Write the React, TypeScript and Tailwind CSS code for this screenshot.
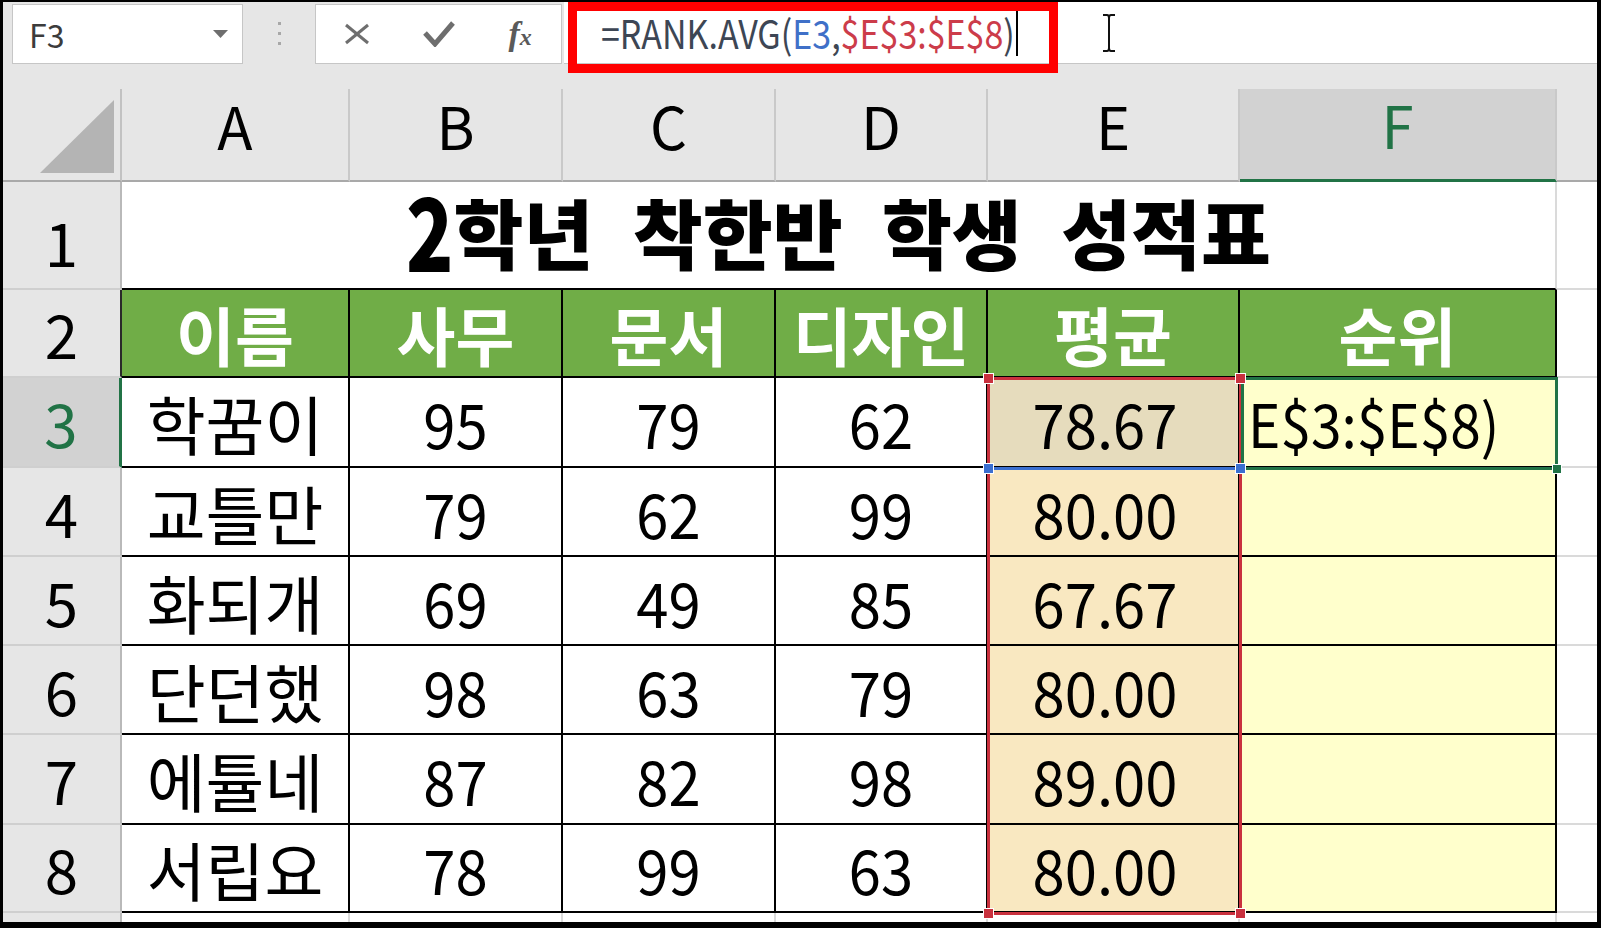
import React from "react";

const names = ["학꿈이", "교틀만", "화되개", "단던했", "에튤네", "서립요"];
const scores = [
  ["95", "79", "62", "78.67"],
  ["79", "62", "99", "80.00"],
  ["69", "49", "85", "67.67"],
  ["98", "63", "79", "80.00"],
  ["87", "82", "98", "89.00"],
  ["78", "99", "63", "80.00"],
];
const heads = ["이름", "사무", "문서", "디자인", "평균", "순위"];

const colHdr =
  "bg-[#e6e6e6] border-r-2 border-b-2 border-r-[#c9c9c9] border-b-[#a9a9a9] flex items-center justify-center pb-[20px] text-[58px] leading-none text-black";
const rowHdr =
  "bg-[#e6e6e6] border-r-2 border-b-2 border-r-[#b9b9b9] border-b-[#cfcfcf] flex items-center justify-center text-[60px] leading-none text-black";
const gridCell = "bg-white border-b-2 border-b-[#dadada]";
const dataCell = "border-r-2 border-b-2 border-black flex items-center justify-center leading-none text-black";
const num = "inline-block text-[58px] scale-y-[1.07]";

function FormulaBar() {
  return (
    <div className="relative h-[63px] flex items-start shrink-0">
      <div className="ml-[9px] mt-[2px] w-[231px] h-[60px] bg-white border border-[#c6c6c6] flex items-center justify-between pl-[16px] pr-[14px]">
        <span className="text-[32px] leading-none text-[#3c3c3c]">F3</span>
        <svg width="15" height="8" viewBox="0 0 15 8">
          <polygon points="0,0 15,0 7.5,8" fill="#6e6e6e" />
        </svg>
      </div>
      <div className="w-[72px] h-[62px] flex flex-col items-center justify-center gap-[7px]">
        <span className="block w-[3px] h-[3px] bg-[#a8a8a8]" />
        <span className="block w-[3px] h-[3px] bg-[#a8a8a8]" />
        <span className="block w-[3px] h-[3px] bg-[#a8a8a8]" />
      </div>
      <div className="mt-[2px] w-[247px] h-[60px] bg-white border border-[#c6c6c6] flex items-center">
        <div className="w-[82px] flex justify-center">
          <svg width="26" height="22" viewBox="0 0 26 22">
            <line x1="2" y1="2" x2="24" y2="20" stroke="#6e6e6e" strokeWidth="3" />
            <line x1="24" y1="2" x2="2" y2="20" stroke="#6e6e6e" strokeWidth="3" />
          </svg>
        </div>
        <div className="w-[82px] flex justify-center">
          <svg width="32" height="26" viewBox="0 0 32 26">
            <polyline points="2,12 12,23 30,2" fill="none" stroke="#6e6e6e" strokeWidth="5" />
          </svg>
        </div>
        <div className="w-[82px] flex justify-center">
          <span className="font-['Liberation_Serif',serif] italic font-bold text-[34px] leading-none text-[#5a5a5a]">
            f<span className="text-[24px]">x</span>
          </span>
        </div>
      </div>
      <div className="ml-[2px] flex-1 h-[62px] bg-white border-b border-[#c6c6c6] flex items-center pl-[37px]">
        <span className="inline-block scale-y-[1.15] text-[34px] leading-none whitespace-pre">
          <span className="text-[#3d4654]">=RANK.AVG(</span>
          <span className="text-[#3f70c8]">E3</span>
          <span className="text-[#3d4654]">,</span>
          <span className="text-[#cc3c4a]">$E$3:$E$8</span>
          <span className="text-[#3d4654]">)</span>
        </span>
        <span className="ml-[1px] w-[2px] h-[47px] bg-black" />
        <svg className="ml-[84px]" width="14" height="38" viewBox="0 0 14 38">
          <path d="M1 1 H5 Q7 1 7 4 V34 Q7 37 5 37 H1 M13 1 H9 Q7 1 7 4 M7 34 Q7 37 9 37 H13" fill="none" stroke="#111" strokeWidth="2" />
        </svg>
      </div>
      <div className="absolute left-[565px] top-0 w-[490px] h-[71px] border-[9px] border-[#ff0000]" />
    </div>
  );
}

function Sheet() {
  return (
    <div className="relative grid grid-cols-[119px_228px_213px_213px_212px_252px_317px_40px] grid-rows-[93px_108px_88px_90px_89px_89px_89px_90px_88px_9px] flex-1 bg-white">
      {/* column headers */}
      <div className="bg-[#e6e6e6] border-r-2 border-b-2 border-r-[#c2c2c2] border-b-[#a9a9a9] flex items-end justify-end pr-[6px] pb-[7px]">
        <svg width="74" height="73" viewBox="0 0 74 73">
          <polygon points="74,0 74,73 0,73" fill="#b4b4b4" />
        </svg>
      </div>
      {["A", "B", "C", "D", "E"].map((c) => (
        <div key={c} className={colHdr}>
          {c}
        </div>
      ))}
      <div className="bg-[#d2d2d2] border-r-2 border-r-[#c9c9c9] border-b-[3px] border-b-[#217346] flex items-center justify-center pb-[20px] text-[58px] leading-none text-[#217346]">
        F
      </div>
      <div className="bg-[#e6e6e6] border-b-2 border-b-[#a9a9a9]" />

      {/* row 1 */}
      <div className="bg-[#e6e6e6] border-r-2 border-b-2 border-r-[#b9b9b9] border-b-[#cfcfcf] flex items-center justify-center pt-[12px] text-[60px] leading-none text-black">
        1
      </div>
      <div className="col-span-6 bg-white border-r-2 border-r-[#dadada] border-b-2 border-b-black flex items-center justify-center pb-[10px] leading-none text-black">
        <span className="text-[76px] font-black [word-spacing:22px] whitespace-pre">
          <span className="inline-block scale-y-[1.3] origin-[50%_61%] text-[78px]">2</span>학년 착한반 학생 성적표
        </span>
      </div>
      <div className={gridCell} />

      {/* row 2 */}
      <div className="bg-[#e6e6e6] border-r-2 border-b-2 border-r-[#2a2a2a] border-b-[#cfcfcf] flex items-center justify-center text-[60px] leading-none text-black">
        2
      </div>
      {heads.map((h) => (
        <div key={h} className={`${dataCell} bg-[#70ad47]`}>
          <span className="text-[64px] font-bold text-white">{h}</span>
        </div>
      ))}
      <div className={gridCell} />

      {/* rows 3-8 */}
      {names.map((n, i) => {
        const r = i + 3;
        const active = r === 3;
        return (
          <React.Fragment key={n}>
            <div
              className={
                active
                  ? "bg-[#d2d2d2] border-r-[3px] border-b-2 border-r-[#217346] border-b-[#cfcfcf] flex items-center justify-center text-[60px] leading-none text-[#217346]"
                  : rowHdr
              }
            >
              {r}
            </div>
            <div className={`${dataCell} bg-white`}>
              <span className="text-[64px]">{n}</span>
            </div>
            {scores[i].slice(0, 3).map((s, j) => (
              <div key={j} className={`${dataCell} bg-white`}>
                <span className={num}>{s}</span>
              </div>
            ))}
            <div className={`${dataCell} pr-[16px] ${active ? "bg-[#e6dcbd]" : "bg-[#f9e8c1]"}`}>
              <span className={num}>{scores[i][3]}</span>
            </div>
            <div className={`${dataCell} bg-[#ffffcc] ${active ? "justify-start! pl-[8px]" : ""}`}>
              {active ? (
                <span className="inline-block scale-y-[1.1] text-[55px] whitespace-pre">E$3:$E$8)</span>
              ) : null}
            </div>
            <div className={gridCell} />
          </React.Fragment>
        );
      })}

      {/* partial row 9 */}
      <div className="bg-[#e6e6e6] border-r-2 border-r-[#b9b9b9]" />
      {[0, 1, 2, 3, 4, 5].map((k) => (
        <div key={k} className="bg-white border-r-2 border-r-[#dadada]" />
      ))}
      <div className="bg-white" />

      {/* range highlight overlays */}
      <div className="absolute left-[984px] top-[288px] w-[255px] h-[538px] border-[3px] border-[#c9313e] pointer-events-none" />
      <div className="absolute left-[987px] top-[378px] w-[249px] h-[3px] bg-[#3a6fd0]" />
      <div className="absolute left-[1238px] top-[288px] w-[317px] h-[93px] border-[3px] border-[#217346]" />
      <div className="absolute left-[981px] top-[285px] w-[9px] h-[9px] bg-[#c9313e] outline outline-1 outline-white" />
      <div className="absolute left-[1233px] top-[285px] w-[9px] h-[9px] bg-[#c9313e] outline outline-1 outline-white" />
      <div className="absolute left-[981px] top-[820px] w-[9px] h-[9px] bg-[#c9313e] outline outline-1 outline-white" />
      <div className="absolute left-[1233px] top-[820px] w-[9px] h-[9px] bg-[#c9313e] outline outline-1 outline-white" />
      <div className="absolute left-[981px] top-[375px] w-[9px] h-[9px] bg-[#3a6fd0] outline outline-1 outline-white" />
      <div className="absolute left-[1233px] top-[375px] w-[9px] h-[9px] bg-[#3a6fd0] outline outline-1 outline-white" />
      <div className="absolute left-[1550px] top-[376px] w-[8px] h-[8px] bg-[#217346] outline outline-1 outline-white" />
    </div>
  );
}

export default function App() {
  return (
    <div className="w-[1601px] h-[928px] bg-black pl-[3px] pt-[2px] pr-[4px] pb-[6px] font-['Noto_Sans_CJK_KR','Noto_Sans',sans-serif]">
      <div className="relative w-full h-full bg-[#e6e6e6] flex flex-col overflow-hidden">
        <FormulaBar />
        <div className="h-[24px] shrink-0" />
        <Sheet />
      </div>
    </div>
  );
}
